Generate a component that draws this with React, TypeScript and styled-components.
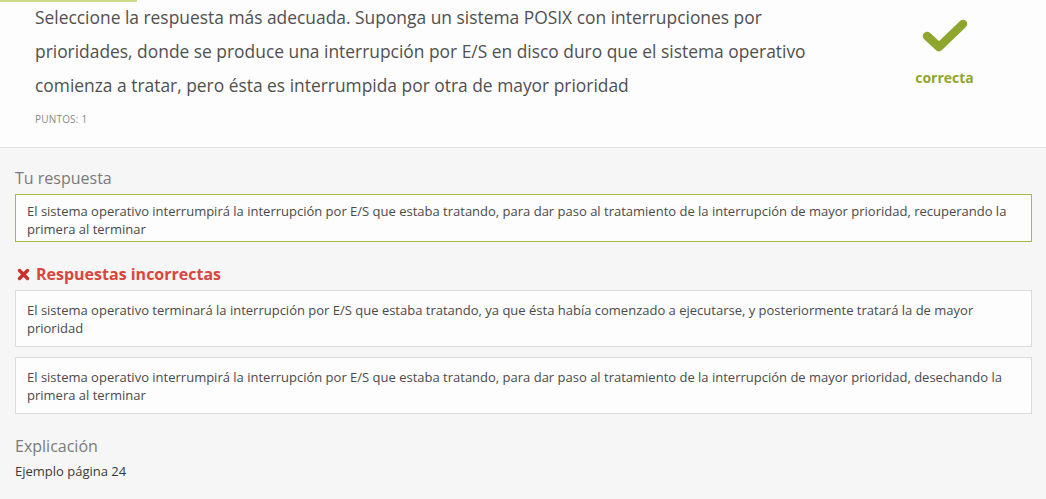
import React from "react";
import styled, { createGlobalStyle } from "styled-components";

const Global = createGlobalStyle`
  html, body { margin: 0; padding: 0; background: #f6f6f6; }
  body { font-family: "Open Sans", "Noto Sans", sans-serif; }
  * { box-sizing: border-box; }
`;

const Page = styled.div`
  width: 1046px;
  min-height: 499px;
  background: #f6f6f6;
`;

const Header = styled.header`
  position: relative;
  display: flex;
  background: #fdfdfd;
  border-bottom: 1px solid #e2e2e2;
  padding: 0 0 20px 35px;
  height: 148px;
`;

const TopAccent = styled.div`
  position: absolute;
  left: 0;
  top: 0;
  width: 137px;
  height: 2px;
  background: #cfd98a;
`;

const QuestionBlock = styled.div`
  width: 800px;
`;

const QuestionText = styled.p`
  margin: 0;
  font-size: 17.4px;
  line-height: 34px;
  color: #505050;
`;

const Points = styled.div`
  margin-top: 10px;
  font-size: 10px;
  line-height: 14px;
  color: #8a8a8a;
  letter-spacing: 0.2px;
`;

const Result = styled.div`
  flex: 1;
  display: flex;
  flex-direction: column;
  align-items: center;
  padding: 18px 0 0 8px;
`;

const ResultLabel = styled.div`
  margin-top: 10px;
  font-size: 14px;
  font-weight: 700;
  color: #8fa62e;
`;

const Body = styled.main`
  padding: 19px 14px 0 15px;
`;

const SectionTitle = styled.h3`
  margin: 0 0 5px;
  font-size: 16px;
  font-weight: 400;
  line-height: 22px;
  color: #7a7a7a;
`;

const WrongTitle = styled.h3`
  display: flex;
  align-items: center;
  gap: 6px;
  margin: 0 0 5px 2px;
  font-size: 16px;
  font-weight: 700;
  line-height: 22px;
  color: #d9463e;
`;

const AnswerBox = styled.div<{ $correct?: boolean }>`
  background: #fdfdfd;
  border: 1px solid ${(p) => (p.$correct ? "#a8b94c" : "#dcdcdc")};
  padding: ${(p) => (p.$correct ? "7px 11px 3px" : "10px 11px 9px")};
  font-size: 13px;
  line-height: 18px;
  color: #4a4a4a;
  margin-bottom: ${(p) => (p.$correct ? "21px" : "10px")};
`;

const Explanation = styled.div`
  margin-top: 21px;
`;

const ExplanationText = styled.div`
  font-size: 13px;
  line-height: 18px;
  color: #3a3a3a;
`;

const CheckIcon = () => (
  <svg width="48" height="40" viewBox="0 0 48 40">
    <path
      d="M6 18 L18 29 L42 6"
      fill="none"
      stroke="#8fa62e"
      strokeWidth="8.5"
      strokeLinecap="round"
      strokeLinejoin="round"
    />
  </svg>
);

const CrossIcon = () => (
  <svg width="13" height="13" viewBox="0 0 13 13">
    <path
      d="M2.5 2.5 L10.5 10.5 M10.5 2.5 L2.5 10.5"
      fill="none"
      stroke="#c9302c"
      strokeWidth="3.4"
      strokeLinecap="round"
    />
  </svg>
);

export default function App() {
  return (
    <Page>
      <Global />
      <Header>
        <TopAccent />
        <QuestionBlock>
          <QuestionText>
            Seleccione la respuesta más adecuada. Suponga un sistema POSIX con
            interrupciones por prioridades, donde se produce una interrupción por
            E/S en disco duro que el sistema operativo comienza a tratar, pero
            ésta es interrumpida por otra de mayor prioridad
          </QuestionText>
          <Points>PUNTOS: 1</Points>
        </QuestionBlock>
        <Result>
          <CheckIcon />
          <ResultLabel>correcta</ResultLabel>
        </Result>
      </Header>
      <Body>
        <SectionTitle>Tu respuesta</SectionTitle>
        <AnswerBox $correct>
          El sistema operativo interrumpirá la interrupción por E/S que estaba
          tratando, para dar paso al tratamiento de la interrupción de mayor
          prioridad, recuperando la primera al terminar
        </AnswerBox>
        <WrongTitle>
          <CrossIcon />
          Respuestas incorrectas
        </WrongTitle>
        <AnswerBox>
          El sistema operativo terminará la interrupción por E/S que estaba
          tratando, ya que ésta había comenzado a ejecutarse, y posteriormente
          tratará la de mayor prioridad
        </AnswerBox>
        <AnswerBox>
          El sistema operativo interrumpirá la interrupción por E/S que estaba
          tratando, para dar paso al tratamiento de la interrupción de mayor
          prioridad, desechando la primera al terminar
        </AnswerBox>
        <Explanation>
          <SectionTitle>Explicación</SectionTitle>
          <ExplanationText>Ejemplo página 24</ExplanationText>
        </Explanation>
      </Body>
    </Page>
  );
}
